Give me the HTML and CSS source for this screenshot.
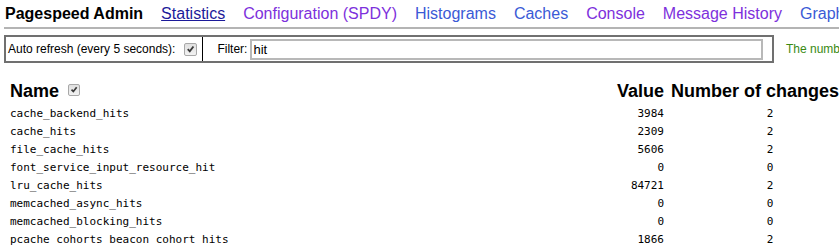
FILE: index.html
```html
<!DOCTYPE html>
<html>
<head>
<meta charset="utf-8">
<title>Pagespeed Admin</title>
<link rel="stylesheet" href="styles.css">
</head>
<body>
<div class="header">
  <span class="title">Pagespeed Admin</span>
  <a class="nav current" href="#">Statistics</a>
  <a class="nav visited" href="#">Configuration (SPDY)</a>
  <a class="nav" href="#">Histograms</a>
  <a class="nav" href="#">Caches</a>
  <a class="nav visited" href="#">Console</a>
  <a class="nav visited" href="#">Message History</a>
  <a class="nav" href="#">Graphs</a>
</div>
<div class="rule"></div>
<div class="controls">
  <div class="ctrlbox">
    <div class="cell refresh">
      <span>Auto refresh (every 5 seconds):</span>
      <span class="check"><svg viewBox="0 0 12 12" width="12" height="12"><path d="M3 6.2 L5.2 8.5 L9.2 3.2" fill="none" stroke="#3a3a3a" stroke-width="2"/></svg></span>
    </div>
    <div class="cell filter">
      <span>Filter:</span>
      <span class="input">hit</span>
    </div>
  </div>
  <span class="note">The number of statistics that match the filter is shown below.</span>
</div>
<div class="stats">
  <div class="hd name">Name <span class="check small"><svg viewBox="0 0 12 12" width="11" height="11"><path d="M3 6.2 L5.2 8.5 L9.2 3.2" fill="none" stroke="#3a3a3a" stroke-width="2"/></svg></span></div>
  <div class="hd val">Value</div>
  <div class="hd chg">Number of changes</div>

  <div class="c name">cache_backend_hits</div><div class="c val">3984</div><div class="c chg">2</div>
  <div class="c name">cache_hits</div><div class="c val">2309</div><div class="c chg">2</div>
  <div class="c name">file_cache_hits</div><div class="c val">5606</div><div class="c chg">2</div>
  <div class="c name">font_service_input_resource_hit</div><div class="c val">0</div><div class="c chg">0</div>
  <div class="c name">lru_cache_hits</div><div class="c val">84721</div><div class="c chg">2</div>
  <div class="c name">memcached_async_hits</div><div class="c val">0</div><div class="c chg">0</div>
  <div class="c name">memcached_blocking_hits</div><div class="c val">0</div><div class="c chg">0</div>
  <div class="c name">pcache_cohorts_beacon_cohort_hits</div><div class="c val">1866</div><div class="c chg">2</div>
</div>
</body>
</html>
```
FILE: styles.css
```css
html, body {
  margin: 0;
  padding: 0;
  overflow: hidden;
  background: #fff;
}
body {
  font-family: "Liberation Sans", Arial, sans-serif;
  color: #000;
  width: 1100px;
}
.header {
  display: flex;
  gap: 18px;
  padding: 4px 0 0 5px;
  line-height: 20px;
  font-size: 16px;
  white-space: nowrap;
}
.title {
  font-weight: bold;
}
.nav {
  text-decoration: none;
  color: #3a5ad6;
}
.nav.visited {
  color: #7d30dc;
}
.nav.current {
  color: #1c1a9a;
  text-decoration: underline;
}
.rule {
  margin: 3px 0 0 4px;
  border-top: 2px solid #b4b4b4;
}
.controls {
  display: flex;
  align-items: center;
  margin: 6px 0 0 4px;
  font-size: 12px;
  white-space: nowrap;
}
.ctrlbox {
  display: flex;
  flex-shrink: 0;
  width: 766px;
  height: 24px;
  border: 2px solid #707070;
}
.cell {
  display: flex;
  align-items: center;
}
.refresh {
  padding: 0 5px 0 2px;
  border-right: 1px solid #000;
  gap: 9px;
}
.check {
  display: inline-flex;
  align-items: center;
  justify-content: center;
  width: 11px;
  height: 11px;
  border: 1px solid #a8a8a8;
  border-radius: 2px;
  background: linear-gradient(#e0e0e0, #f2f2f2);
}
.check.small {
  width: 10px;
  height: 10px;
  vertical-align: 2px;
  margin-left: 4px;
}
.filter {
  flex: 1;
  padding: 0 9px 0 14px;
  gap: 3px;
}
.input {
  flex: 1;
  height: 17px;
  line-height: 17px;
  border: 2px solid #b8b8b8;
  padding-left: 1px;
  font-size: 13px;
}
.note {
  margin-left: 12px;
  color: #3a8a12;
}
.stats {
  display: grid;
  grid-template-columns: 599px 48px 198px;
  column-gap: 7px;
  margin: 18px 0 0 10px;
}
.hd {
  font-size: 18px;
  font-weight: bold;
  line-height: 20px;
  padding-bottom: 4px;
  white-space: nowrap;
}
.c {
  font-family: "DejaVu Sans Mono", "Liberation Mono", monospace;
  font-size: 11px;
  line-height: 18px;
  white-space: nowrap;
}
.val {
  text-align: right;
}
.c.chg {
  text-align: center;
}
```
